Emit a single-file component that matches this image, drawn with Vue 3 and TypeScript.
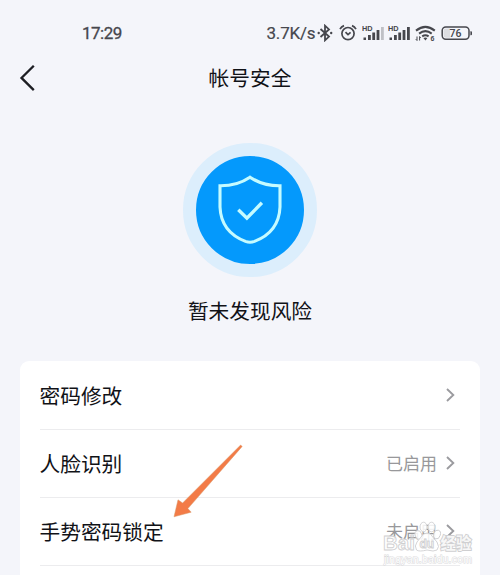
<script setup lang="ts">
interface SettingRow {
  label: string
  status?: string
}

const rows: SettingRow[] = [
  { label: '密码修改' },
  { label: '人脸识别', status: '已启用' },
  { label: '手势密码锁定', status: '未启用' },
]
const signals: number[] = [3, 4]
</script>

<template>
  <main class="screen">
    <div class="status-bar">
      <span class="time">17:29</span>
      <div class="indicators">
        <span class="speed">3.7K/s</span>
        <svg class="bluetooth" width="16" height="18" viewBox="0 0 16 18">
          <path d="M3.5 5 12 12.6 8 16.3V1.7L12 5.4 3.5 13" fill="none" stroke="#46474d" stroke-width="1.8" />
          <circle cx="1.7" cy="9" r="1.2" fill="#46474d" />
          <circle cx="14.2" cy="9" r="1.2" fill="#46474d" />
        </svg>
        <svg class="alarm" width="18" height="18" viewBox="0 0 18 18" fill="none" stroke="#46474d" stroke-width="1.7">
          <circle cx="9" cy="9.6" r="6.1" />
          <path d="M1 5.2Q2.4 2.7 5 1.6M17 5.2Q15.6 2.7 13 1.6M6.5 8.2 9 10.7l2.6-2.3" />
        </svg>
        <svg v-for="level in signals" :key="level" class="signal" width="23" height="18" viewBox="0 0 23 18">
          <text x="0" y="6.7" class="hd">HD</text>
          <g fill="#46474d">
            <rect x="1.5" y="13.5" width="2.5" height="2.5" />
            <rect x="6" y="11" width="2.8" height="5" />
            <rect x="10.3" y="8.5" width="2.8" height="7.5" />
            <rect x="14.6" y="6" width="2.8" height="10" />
            <rect x="19" y="3" width="2.8" height="13" :opacity="level < 4 ? 0.3 : 1" />
          </g>
        </svg>
        <svg class="wifi" width="21" height="18" viewBox="0 0 21 18">
          <path d="M1 6.6Q10.4-.9 19.8 6.6M4.1 9.6Q10.4 4.7 16.7 9.6M7.2 12.4Q10.4 10.2 13.6 12.4" fill="none" stroke="#46474d" stroke-width="2" />
          <path d="m8.4 14 2 2.4 2-2.4Q10.4 12.8 8.4 14Z" fill="#46474d" />
          <path d="M2 12.5v4M.8 15.2 2 16.5M4.6 16.5v-4l1.2 1.3" fill="none" stroke="#46474d" />
          <text x="15.5" y="17" class="wifi-version">6</text>
        </svg>
        <svg class="battery" width="32" height="18" viewBox="0 0 32 18">
          <rect x="1.2" y="3" width="26.8" height="12.2" rx="3.6" fill="none" stroke="#46474d" stroke-width="1.5" />
          <path d="M5 4.4h4v9.4H5Q2.6 13.8 2.6 11.4V6.8Q2.6 4.4 5 4.4Z" fill="#dcdde1" />
          <path d="M29.4 7.2h.6q1 0 1 1v2q0 1-1 1h-.6Z" fill="#46474d" />
          <text x="14.5" y="12.8" text-anchor="middle" class="battery-level">76</text>
        </svg>
      </div>
    </div>

    <header class="nav-bar">
      <svg class="back" width="18" height="28" viewBox="0 0 18 28">
        <path d="M14.8 1.7 2.5 13.9 14.8 26.1" fill="none" stroke="#1d1e23" stroke-width="2.3" />
      </svg>
      <h1>帐号安全</h1>
    </header>

    <section class="safety">
      <div class="badge">
        <svg width="64" height="70" viewBox="0 0 64 70" fill="none" stroke="#c5fbff" stroke-width="3.1">
          <path d="M32 2.2Q45 11 62 10.8V32Q61 57 36.5 66.4Q32 68 27.5 66.4Q3 57 2 32V10.8Q19 11 32 2.2Z" />
          <path d="m20.3 34.7 8.6 8.4 15-15.3" stroke-width="3.4" />
        </svg>
      </div>
      <p>暂未发现风险</p>
    </section>

    <section class="card">
      <div v-for="row in rows" :key="row.label" class="row">
        <span class="label">{{ row.label }}</span>
        <span class="value">{{ row.status }}</span>
        <svg class="chevron" width="11" height="16" viewBox="0 0 11 16">
          <path d="m2 2 6.3 6L2 14" fill="none" stroke="#9b9b9f" stroke-width="1.9" />
        </svg>
      </div>
    </section>

    <svg class="pointer" width="74" height="78" viewBox="0 0 74 78">
      <path d="M68.6 3 70.2 4.4 15.9 66.6 19.2 70.2 2 74.8 6 57.8 10.6 61Z" fill="#f37b47" stroke="#d99b6b" stroke-width=".5" />
    </svg>

    <svg class="watermark" width="98" height="52" viewBox="0 0 98 52">
      <g fill="#fff" fill-opacity=".85" stroke="#cfcfd1" stroke-width=".9">
        <ellipse cx="38.5" cy="16" rx="3.3" ry="4.5" transform="rotate(-18 38.5 16)" />
        <ellipse cx="43.5" cy="8" rx="3.5" ry="4.8" />
        <ellipse cx="51.5" cy="8" rx="3.5" ry="4.8" />
        <ellipse cx="57" cy="15.5" rx="3.3" ry="4.5" transform="rotate(18 57 15.5)" />
        <path d="M47 14Q51 14 53.5 19L57 23Q60 28 57 31Q54 33 47 31Q39 33 36.5 31Q34 27 37 23L41 18Q43 14 47 14Z" />
        <text x="3" y="30.5" class="brand" textLength="32" lengthAdjust="spacingAndGlyphs">Bai</text>
        <text x="39.5" y="28.5" class="brand-small">du</text>
        <g stroke-width="1.8" paint-order="stroke">
          <text x="60.5" y="29.5" class="brand-cn" textLength="31">经验</text>
        </g>
      </g>
      <text x="4" y="43.5" class="site" textLength="88">jingyan.baidu.com</text>
    </svg>
  </main>
</template>

<style>
body {
  margin: 0;
  overflow: hidden;
}
</style>

<style scoped>
.screen {
  position: relative;
  box-sizing: border-box;
  width: 500px;
  height: 575px;
  overflow: hidden;
  background: #f4f5fa;
  color: #111217;
  font-family: "Noto Sans CJK SC", sans-serif;
}
.status-bar {
  display: flex;
  align-items: center;
  justify-content: space-between;
  box-sizing: border-box;
  height: 56px;
  padding: 10px 27px 0 82px;
  color: #46474d;
  font-family: Roboto, sans-serif;
  font-size: 17px;
}
.time {
  font-size: 17px;
  font-weight: 400;
  letter-spacing: -.5px;
  -webkit-text-stroke: .3px #46474d;
}
.indicators {
  display: flex;
  align-items: center;
}
.speed {
  width: 50.5px;
  font-size: 17px;
  font-weight: 400;
  letter-spacing: -.2px;
  -webkit-text-stroke: .2px #46474d;
}
.bluetooth { margin-right: 6px; }
.alarm { margin-right: 5px; }
.signal { margin-right: 3px; }
.wifi { margin: 0 5px 0 1px; }
.hd {
  fill: #46474d;
  font: 700 7.3px "Liberation Sans", sans-serif;
}
.wifi-version {
  fill: #46474d;
  font: 700 7px "Liberation Sans", sans-serif;
}
.battery-level {
  fill: #46474d;
  font: 500 10.5px Roboto, sans-serif;
}
.nav-bar {
  display: grid;
  grid-template-columns: 44px 1fr 44px;
  align-items: center;
  height: 44px;
}
.back { margin-left: 19px; }
h1 {
  margin: 0;
  padding-bottom: 2px;
  font-size: 20.7px;
  line-height: 30px;
  font-weight: 400;
  text-align: center;
}
.safety {
  display: flex;
  flex-direction: column;
  align-items: center;
  height: 261px;
}
.badge {
  display: flex;
  align-items: center;
  justify-content: center;
  box-sizing: border-box;
  width: 134px;
  height: 134px;
  margin-top: 43px;
  border: 13.5px solid #dceefc;
  border-radius: 50%;
  background: #0499fc;
}
.safety p {
  margin: 18px 0 0;
  font-size: 20.7px;
  line-height: 30px;
}
.card {
  margin: 0 20px;
  box-sizing: border-box;
  height: 230px;
  padding: 1px 20px 0;
  border-radius: 9px;
  background: #fff;
}
.row {
  display: flex;
  align-items: center;
  box-sizing: border-box;
  height: 68px;
  padding-bottom: 2px;
  border-bottom: 1px solid #ececee;
}
.label {
  flex: 1;
  margin-left: -.5px;
  font-size: 20.7px;
  line-height: 30px;
}
.value {
  color: #98989b;
  font-size: 17px;
  line-height: 26px;
}
.chevron { margin: 0 4px 0 8px; }
.pointer {
  position: absolute;
  left: 172px;
  top: 442px;
}
.watermark {
  position: absolute;
  left: 380px;
  top: 519px;
}
.brand {
  font: 700 21px "Liberation Sans", sans-serif;
}
.brand-small {
  font: 700 12px "Liberation Sans", sans-serif;
}
.brand-cn {
  font: 700 15.5px "Noto Sans CJK SC", sans-serif;
}
.site {
  fill: #fff;
  stroke: #d9d9db;
  stroke-width: 1px;
  paint-order: stroke;
  font: 10.5px "Liberation Sans", sans-serif;
}
</style>
